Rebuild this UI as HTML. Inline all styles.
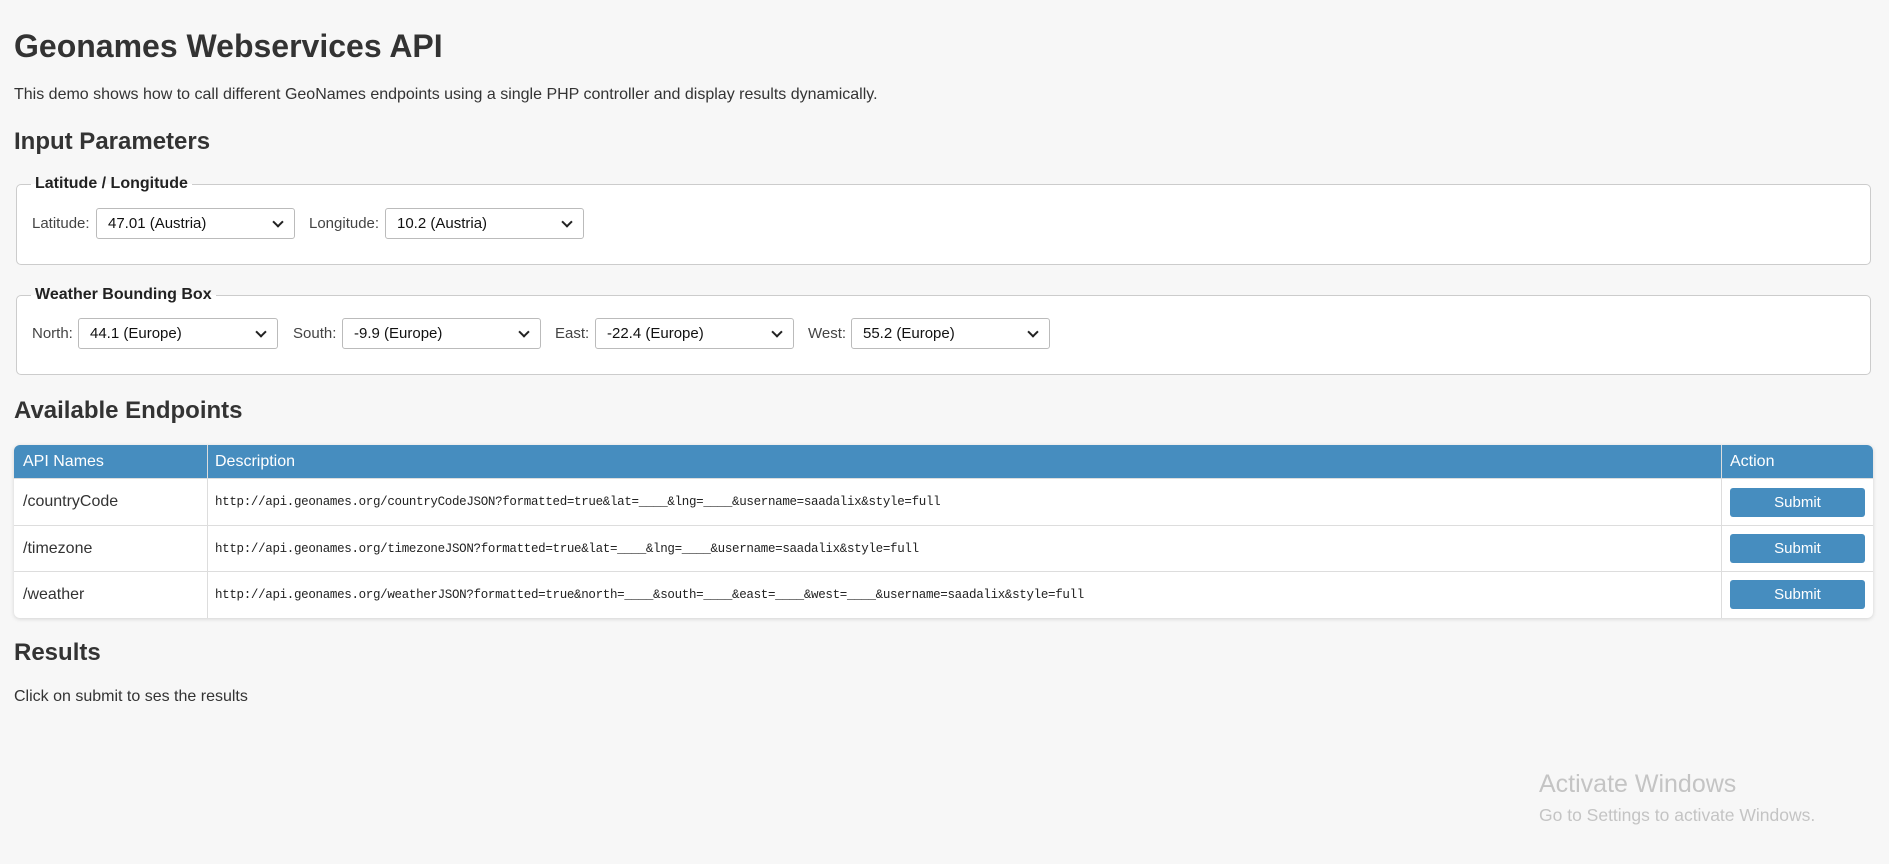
<!DOCTYPE html>
<html><head><meta charset="utf-8"><style>
body{margin:0;background:#f7f7f7;font-family:"Liberation Sans",Arial,sans-serif;color:#333;width:1889px;height:864px;overflow:hidden;position:relative}
.a{position:absolute;white-space:nowrap}
h1,h2{margin:0;font-weight:bold}
.fs{position:absolute;left:16px;width:1855px;border:1px solid #ccc;border-radius:5px;background:#fff;box-sizing:border-box}
.lg{position:absolute;top:-11px;left:14px;padding:0 4px;font-weight:bold;font-size:16px;line-height:20px;color:#222;background:linear-gradient(#f7f7f7 50%,#fff 50%)}
.sel{position:absolute;height:31px;width:199px;border:1px solid #bbb;border-radius:3px;background:#fff;box-sizing:border-box;font-size:15px;line-height:29px;padding-left:11px;color:#111}
.sel:after{content:"";position:absolute;right:12px;top:9px;width:6px;height:6px;border-right:2px solid #222;border-bottom:2px solid #222;transform:rotate(45deg)}
.lb{position:absolute;font-size:15px;color:#444;line-height:31px}
.tb{position:absolute;left:14px;top:445px;width:1859px;height:173px;background:#fff;border-radius:6px;box-shadow:0 1px 4px rgba(0,0,0,.15);overflow:hidden}
.hd{position:absolute;left:0;top:0;width:100%;height:33px;background:#468dbf}
.ht{position:absolute;color:#fff;font-size:16px;line-height:33px}
.vl{position:absolute;top:0;width:1px;height:173px;background:#ddd}
.hl{position:absolute;left:0;width:100%;height:1px;background:#ddd}
.nm{position:absolute;left:9px;font-size:16px;line-height:46px;color:#333}
.ds{position:absolute;left:201px;font-family:"Liberation Mono",monospace;font-size:12.5px;line-height:46px;color:#222;letter-spacing:-0.32px}
.bt{position:absolute;left:1716px;width:135px;height:29px;background:#468dbf;border-radius:3px;color:#fff;font-size:15px;text-align:center;line-height:29px}
</style></head><body>
<h1 class="a" style="left:14px;top:26px;font-size:32px;line-height:40px">Geonames Webservices API</h1>
<div class="a" style="left:14px;top:85px;font-size:16px;line-height:20px">This demo shows how to call different GeoNames endpoints using a single PHP controller and display results dynamically.</div>
<h2 class="a" style="left:14px;top:128px;font-size:24px;line-height:28px">Input Parameters</h2>

<div class="fs" style="top:184px;height:81px">
<div class="lg">Latitude / Longitude</div>
<div class="lb" style="left:15px;top:23px">Latitude:</div>
<div class="sel" style="left:79px;top:23px">47.01 (Austria)</div>
<div class="lb" style="left:292px;top:23px">Longitude:</div>
<div class="sel" style="left:368px;top:23px">10.2 (Austria)</div>
</div>

<div class="fs" style="top:295px;height:80px">
<div class="lg">Weather Bounding Box</div>
<div class="lb" style="left:15px;top:22px">North:</div>
<div class="sel" style="left:61px;top:22px;width:200px">44.1 (Europe)</div>
<div class="lb" style="left:276px;top:22px">South:</div>
<div class="sel" style="left:325px;top:22px">-9.9 (Europe)</div>
<div class="lb" style="left:538px;top:22px">East:</div>
<div class="sel" style="left:578px;top:22px">-22.4 (Europe)</div>
<div class="lb" style="left:791px;top:22px">West:</div>
<div class="sel" style="left:834px;top:22px">55.2 (Europe)</div>
</div>

<h2 class="a" style="left:14px;top:397px;font-size:24px;line-height:28px">Available Endpoints</h2>

<div class="tb">
<div class="hd"></div>
<div class="ht" style="left:9px">API Names</div>
<div class="ht" style="left:201px">Description</div>
<div class="ht" style="left:1716px">Action</div>
<div class="vl" style="left:193px"></div>
<div class="vl" style="left:1707px"></div>
<div class="hl" style="top:33px"></div>
<div class="hl" style="top:80px"></div>
<div class="hl" style="top:126px"></div>
<div class="nm" style="top:34px">/countryCode</div>
<div class="ds" style="top:34px">http://api.geonames.org/countryCodeJSON?formatted=true&amp;lat=____&amp;lng=____&amp;username=saadalix&amp;style=full</div>
<div class="bt" style="top:43px">Submit</div>
<div class="nm" style="top:81px">/timezone</div>
<div class="ds" style="top:81px">http://api.geonames.org/timezoneJSON?formatted=true&amp;lat=____&amp;lng=____&amp;username=saadalix&amp;style=full</div>
<div class="bt" style="top:89px">Submit</div>
<div class="nm" style="top:127px">/weather</div>
<div class="ds" style="top:127px">http://api.geonames.org/weatherJSON?formatted=true&amp;north=____&amp;south=____&amp;east=____&amp;west=____&amp;username=saadalix&amp;style=full</div>
<div class="bt" style="top:135px">Submit</div>
</div>

<h2 class="a" style="left:14px;top:639px;font-size:24px;line-height:28px">Results</h2>
<div class="a" style="left:14px;top:687px;font-size:16px;line-height:20px">Click on submit to ses the results</div>

<div class="a" style="left:1539px;top:769px;font-size:25px;line-height:30px;color:#c4c4c4">Activate Windows</div>
<div class="a" style="left:1539px;top:804px;font-size:17.5px;line-height:22px;color:#c4c4c4">Go to Settings to activate Windows.</div>
</body></html>
